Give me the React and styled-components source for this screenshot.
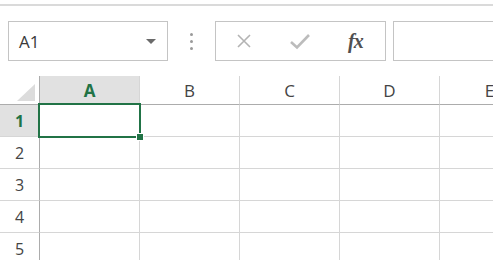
import React from "react";
import styled, { createGlobalStyle } from "styled-components";

const GlobalStyle = createGlobalStyle`
  html, body {
    margin: 0;
    padding: 0;
    background: #ffffff;
  }
  body {
    font-family: "Open Sans", "Noto Sans", "Liberation Sans", sans-serif;
  }
`;

const Page = styled.div`
  width: 493px;
  height: 260px;
  overflow: hidden;
  background: #ffffff;
`;

const TopRule = styled.div`
  margin-top: 4px;
  height: 2px;
  background: #dadada;
`;

const FormulaBar = styled.div`
  display: flex;
  align-items: stretch;
  height: 40px;
  margin-top: 15px;
  padding-left: 8px;
`;

const NameBox = styled.div`
  box-sizing: border-box;
  width: 160px;
  display: flex;
  align-items: center;
  justify-content: space-between;
  padding: 0 11px 0 10px;
  border: 1px solid #c4c4c4;
  font-size: 17px;
  color: #3a3a3a;
`;

const Caret = styled.span`
  width: 0;
  height: 0;
  border-left: 5px solid transparent;
  border-right: 5px solid transparent;
  border-top: 5px solid #6a6a6a;
`;

const Grip = styled.div`
  width: 47px;
  display: flex;
  flex-direction: column;
  align-items: center;
  justify-content: center;
  gap: 4px;
  span {
    width: 3px;
    height: 3px;
    border-radius: 50%;
    background: #9a9a9a;
  }
`;

const ActionBox = styled.div`
  box-sizing: border-box;
  width: 171px;
  display: flex;
  align-items: center;
  border: 1px solid #c4c4c4;
  padding-left: 20px;
  gap: 37px;
`;

const Fx = styled.span`
  font-family: "Liberation Serif", "DejaVu Serif", serif;
  font-style: italic;
  font-weight: bold;
  font-size: 20px;
  color: #505050;
  letter-spacing: -1px;
`;

const FormulaInput = styled.div`
  flex: 1;
  margin-left: 7px;
  border: 1px solid #c4c4c4;
  border-right: none;
`;

const Sheet = styled.div`
  display: grid;
  grid-template-columns: 40px repeat(5, 100px);
  grid-template-rows: 29px repeat(5, 32px);
  margin-top: 15px;
  width: 540px;
`;

const Corner = styled.div`
  position: relative;
  border-right: 1px solid #acacac;
  border-bottom: 1px solid #acacac;
  svg {
    position: absolute;
    right: 4px;
    bottom: 3px;
  }
`;

const ColHead = styled.div`
  display: flex;
  align-items: center;
  justify-content: center;
  border-right: 1px solid #d6d6d6;
  border-bottom: 1px solid #acacac;
  font-size: 17px;
  background: ${(p) => (p.$active ? "#e1e1e1" : "#ffffff")};
  color: ${(p) => (p.$active ? "#217346" : "#444444")};
  font-weight: ${(p) => (p.$active ? 700 : 400)};
`;

const RowHead = styled.div`
  display: flex;
  align-items: center;
  justify-content: center;
  border-right: 1px solid #acacac;
  border-bottom: 1px solid #d6d6d6;
  font-size: 16px;
  background: ${(p) => (p.$active ? "#e1e1e1" : "#ffffff")};
  color: ${(p) => (p.$active ? "#217346" : "#444444")};
  font-weight: ${(p) => (p.$active ? 700 : 400)};
`;

const Cell = styled.div`
  position: relative;
  border-right: 1px solid #d6d6d6;
  border-bottom: 1px solid #d6d6d6;
`;

const Selection = styled.div`
  position: absolute;
  left: -2px;
  top: -2px;
  right: -2px;
  bottom: -2px;
  border: 2px solid #217346;
  pointer-events: none;
  z-index: 1;
`;

const FillHandle = styled.span`
  position: absolute;
  right: -5px;
  bottom: -5px;
  width: 6px;
  height: 6px;
  background: #217346;
  border: 1px solid #ffffff;
`;

const cols = ["A", "B", "C", "D", "E"];
const rows = [1, 2, 3, 4, 5];

export default function App() {
  return (
    <Page>
      <GlobalStyle />
      <TopRule />
      <FormulaBar>
        <NameBox>
          A1
          <Caret />
        </NameBox>
        <Grip>
          <span />
          <span />
          <span />
        </Grip>
        <ActionBox>
          <svg width="16" height="16" viewBox="0 0 16 16">
            <path d="M2 2 L14 14 M14 2 L2 14" stroke="#b3b3b3" strokeWidth="1.6" fill="none" />
          </svg>
          <svg width="22" height="18" viewBox="0 0 22 18">
            <path d="M2 10 L8 15.5 L20 3" stroke="#bcbcbc" strokeWidth="2.6" fill="none" />
          </svg>
          <Fx>fx</Fx>
        </ActionBox>
        <FormulaInput />
      </FormulaBar>
      <Sheet>
        <Corner>
          <svg width="18" height="17" viewBox="0 0 18 17">
            <polygon points="18,0 18,17 0,17" fill="#dcdcdc" />
          </svg>
        </Corner>
        {cols.map((c, i) => (
          <ColHead key={c} $active={i === 0}>
            {c}
          </ColHead>
        ))}
        {rows.map((r) => (
          <React.Fragment key={r}>
            <RowHead $active={r === 1}>{r}</RowHead>
            {cols.map((c, i) => (
              <Cell key={c}>
                {r === 1 && i === 0 && (
                  <Selection>
                    <FillHandle />
                  </Selection>
                )}
              </Cell>
            ))}
          </React.Fragment>
        ))}
      </Sheet>
    </Page>
  );
}
